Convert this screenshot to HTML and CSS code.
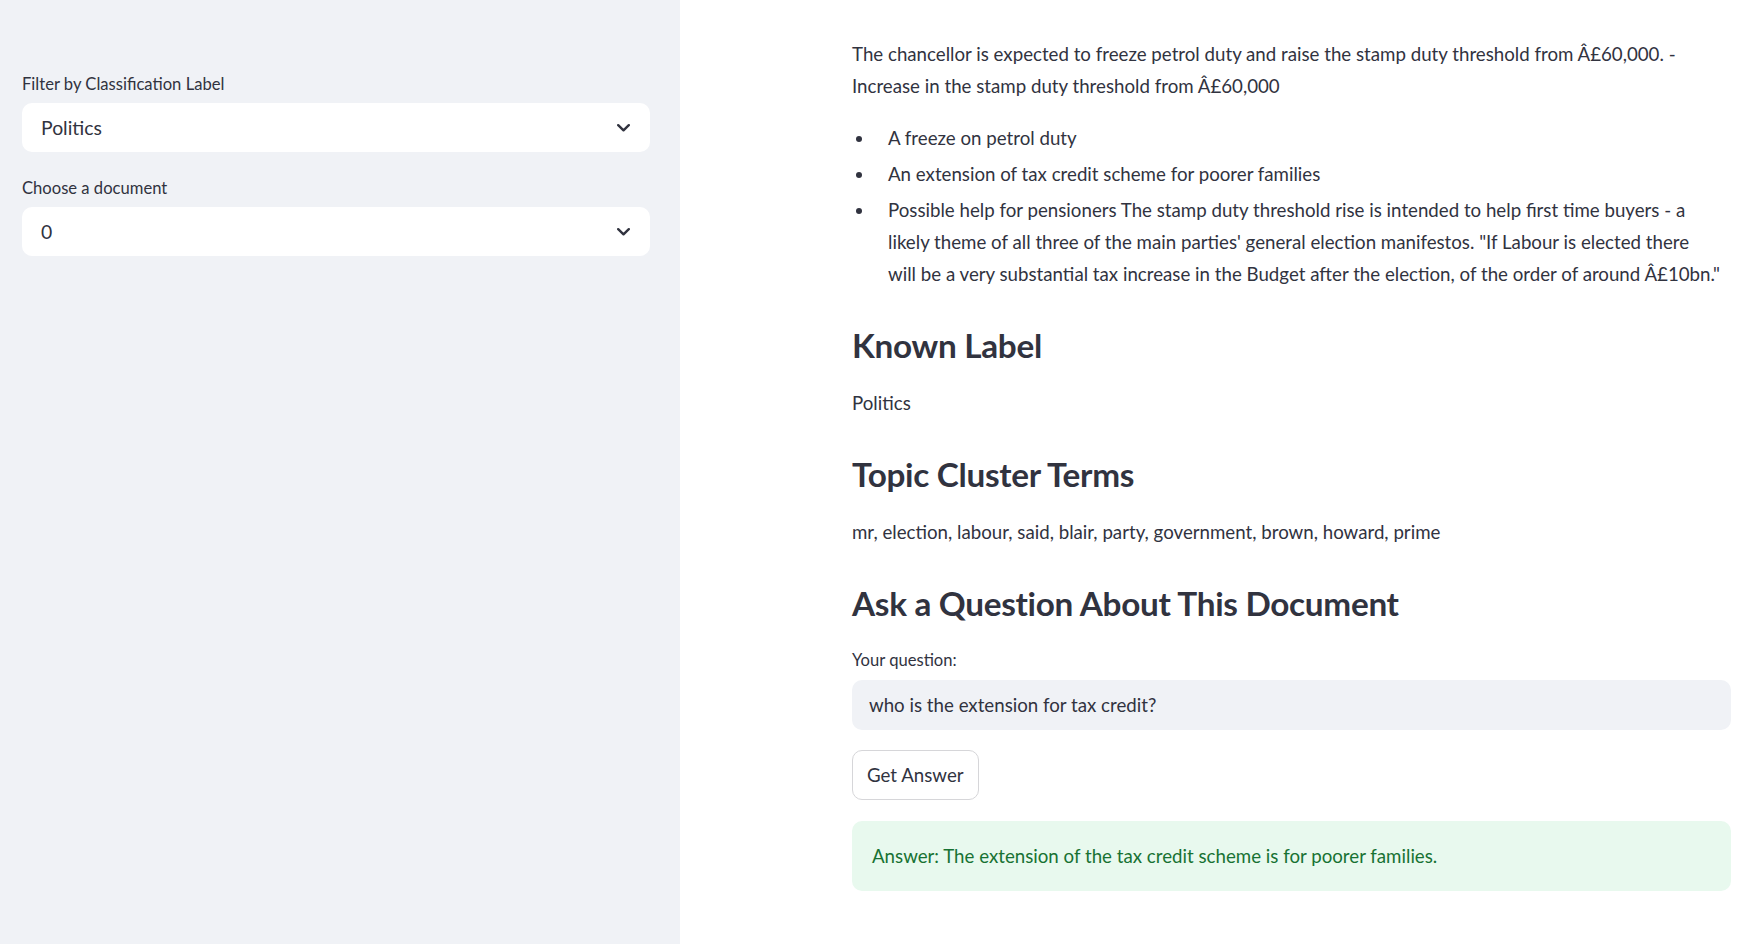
FILE: index.html
```html
<!DOCTYPE html>
<html lang="en">
<head>
<meta charset="utf-8">
<title>Document Explorer</title>
<link rel="stylesheet" href="styles.css">
</head>
<body>
<div class="app">
  <aside class="sidebar">
    <div class="field">
      <label class="field-label">Filter by Classification Label</label>
      <div class="select">
        <span class="select-value">Politics</span>
        <svg class="chevron" width="13" height="8" viewBox="0 0 13 8"><polyline points="1.2,1.2 6.5,6.3 11.8,1.2" fill="none" stroke="#31333f" stroke-width="2.4" stroke-linecap="round" stroke-linejoin="round"/></svg>
      </div>
    </div>
    <div class="field">
      <label class="field-label">Choose a document</label>
      <div class="select">
        <span class="select-value">0</span>
        <svg class="chevron" width="13" height="8" viewBox="0 0 13 8"><polyline points="1.2,1.2 6.5,6.3 11.8,1.2" fill="none" stroke="#31333f" stroke-width="2.4" stroke-linecap="round" stroke-linejoin="round"/></svg>
      </div>
    </div>
  </aside>
  <main class="main">
    <div class="content">
      <p class="para">The chancellor is expected to freeze petrol duty and raise the stamp duty threshold from Â£60,000. -<br>Increase in the stamp duty threshold from Â£60,000</p>
      <ul class="list">
        <li>A freeze on petrol duty</li>
        <li>An extension of tax credit scheme for poorer families</li>
        <li><span>Possible help for pensioners The stamp duty threshold rise is intended to help first time buyers - a<br>likely theme of all three of the main parties' general election manifestos. "If Labour is elected there<br>will be a very substantial tax increase in the Budget after the election, of the order of around Â£10bn."</span></li>
      </ul>
      <h3 class="heading first">Known Label</h3>
      <p class="text">Politics</p>
      <h3 class="heading">Topic Cluster Terms</h3>
      <p class="text">mr, election, labour, said, blair, party, government, brown, howard, prime</p>
      <h3 class="heading">Ask a Question About This Document</h3>
      <label class="field-label question-label">Your question:</label>
      <div class="input">who is the extension for tax credit?</div>
      <button class="button">Get Answer</button>
      <div class="alert">Answer: The extension of the tax credit scheme is for poorer families.</div>
    </div>
  </main>
</div>
</body>
</html>
```

FILE: styles.css
```css
* { box-sizing: border-box; }
html, body { margin: 0; padding: 0; }
body {
  font-family: "Lato", "Liberation Sans", sans-serif;
  color: #31333f;
  background: #ffffff;
  width: 1742px;
  height: 944px;
  overflow: hidden;
}
.app {
  display: flex;
  height: 944px;
}
.sidebar {
  width: 680px;
  flex: none;
  background: #f0f2f6;
  padding: 72px 30px 0 22px;
  display: flex;
  flex-direction: column;
  gap: 24px;
}
.field { display: flex; flex-direction: column; }
.field-label {
  display: block;
  font-size: 16.6px;
  line-height: 25px;
  height: 25px;
  margin-bottom: 6px;
  color: #31333f;
}
.select {
  height: 49px;
  background: #ffffff;
  border-radius: 10px;
  display: flex;
  align-items: center;
  justify-content: space-between;
  padding: 0 20px 0 19px;
  font-size: 19.4px;
}
.chevron { display: block; }
.main {
  flex: 1;
  padding: 38px 0 0 172px;
}
.content {
  width: 879px;
  display: flex;
  flex-direction: column;
  align-items: flex-start;
}
.para, .text, .list {
  font-size: 18.7px;
  line-height: 32px;
  margin: 0 0 20px 0;
  white-space: nowrap;
}
.list {
  list-style: none;
  padding-left: 0;
  margin-bottom: 0;
}
.list li {
  display: flex;
  align-items: flex-start;
  margin-bottom: 4px;
}
.list li::before {
  content: "";
  flex: none;
  width: 6px;
  height: 6px;
  border-radius: 50%;
  background: #31333f;
  margin: 14px 26px 0 4px;
}
.heading {
  font-size: 33.3px;
  line-height: 42px;
  font-weight: 700;
  margin: 34px 0 21px 0;
  letter-spacing: -0.3px;
}
.heading.first { margin-top: 30px; }
.text { margin-bottom: 0; }
.question-label { margin-top: 3px; margin-bottom: 7px; }
.input {
  width: 879px;
  height: 50px;
  background: #f0f2f6;
  border-radius: 10px;
  padding: 0 17px;
  display: flex;
  align-items: center;
  font-size: 18.7px;
}
.button {
  margin-top: 20px;
  height: 50px;
  padding: 0 14px;
  background: #ffffff;
  border: 1px solid #d6d6d9;
  border-radius: 10px;
  font-family: inherit;
  font-size: 18.7px;
  color: #31333f;
}
.alert {
  margin-top: 21px;
  width: 879px;
  height: 70px;
  background: #e8f9ee;
  border-radius: 10px;
  color: #177233;
  padding: 0 20px;
  display: flex;
  align-items: center;
  font-size: 18.7px;
}
```
